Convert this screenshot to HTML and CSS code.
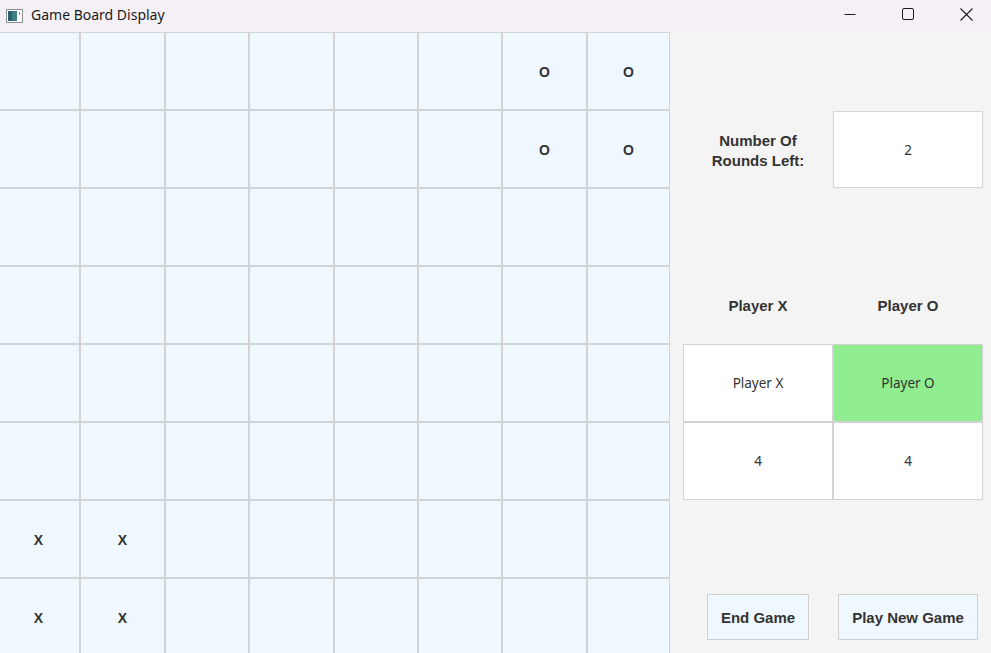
FILE: index.html
```html
<!DOCTYPE html>
<html lang="en">
<head>
<meta charset="utf-8">
<title>Game Board Display</title>
<link rel="stylesheet" href="styles.css">
</head>
<body>
<div class="window">
  <header class="titlebar">
    <div class="title">
      <svg class="app-icon" width="17" height="14" viewBox="0 0 17 14">
        <rect x="0.5" y="0.5" width="16" height="13" fill="#ffffff" stroke="#8a8f94"/>
        <rect x="2" y="2" width="9" height="10" fill="#3f7f80"/>
        <rect x="2" y="2" width="4" height="10" fill="#2e5f6b"/>
        <rect x="13" y="3" width="1" height="3" fill="#7f8a90"/>
      </svg>
      <span class="title-text">Game Board Display</span>
    </div>
    <div class="controls">
      <span class="ctl"><svg width="12" height="12" viewBox="0 0 12 12"><path d="M0.5 6.5h11" stroke="#1a1a1a" stroke-width="1"/></svg></span>
      <span class="ctl"><svg width="12" height="12" viewBox="0 0 12 12"><rect x="0.5" y="0.5" width="11" height="11" rx="1.5" fill="none" stroke="#1a1a1a" stroke-width="1"/></svg></span>
      <span class="ctl"><svg width="13" height="13" viewBox="0 0 13 13"><path d="M0.5 0.5l12 12M12.5 0.5l-12 12" stroke="#1a1a1a" stroke-width="1.1"/></svg></span>
    </div>
  </header>
  <main class="main">
    <section class="board">
      <div class="cell"></div><div class="cell"></div><div class="cell"></div><div class="cell"></div><div class="cell"></div><div class="cell"></div><div class="cell">O</div><div class="cell">O</div>
      <div class="cell"></div><div class="cell"></div><div class="cell"></div><div class="cell"></div><div class="cell"></div><div class="cell"></div><div class="cell">O</div><div class="cell">O</div>
      <div class="cell"></div><div class="cell"></div><div class="cell"></div><div class="cell"></div><div class="cell"></div><div class="cell"></div><div class="cell"></div><div class="cell"></div>
      <div class="cell"></div><div class="cell"></div><div class="cell"></div><div class="cell"></div><div class="cell"></div><div class="cell"></div><div class="cell"></div><div class="cell"></div>
      <div class="cell"></div><div class="cell"></div><div class="cell"></div><div class="cell"></div><div class="cell"></div><div class="cell"></div><div class="cell"></div><div class="cell"></div>
      <div class="cell"></div><div class="cell"></div><div class="cell"></div><div class="cell"></div><div class="cell"></div><div class="cell"></div><div class="cell"></div><div class="cell"></div>
      <div class="cell">X</div><div class="cell">X</div><div class="cell"></div><div class="cell"></div><div class="cell"></div><div class="cell"></div><div class="cell"></div><div class="cell"></div>
      <div class="cell">X</div><div class="cell">X</div><div class="cell"></div><div class="cell"></div><div class="cell"></div><div class="cell"></div><div class="cell"></div><div class="cell"></div>
    </section>
    <aside class="panel">
      <div class="slot"></div><div class="slot"></div>
      <div class="slot label rounds-label">Number Of<br>Rounds Left:</div>
      <div class="slot"><div class="box rounds">2</div></div>
      <div class="slot"></div><div class="slot"></div>
      <div class="slot label head">Player X</div>
      <div class="slot label head">Player O</div>
      <div class="box">Player X</div>
      <div class="box active">Player O</div>
      <div class="box">4</div>
      <div class="box">4</div>
      <div class="slot"></div><div class="slot"></div>
      <div class="slot"><button class="btn">End Game</button></div>
      <div class="slot"><button class="btn">Play New Game</button></div>
    </aside>
  </main>
</div>
</body>
</html>
```
FILE: styles.css
```css
* { box-sizing: border-box; }
html, body { margin: 0; padding: 0; }
body {
  width: 991px;
  height: 653px;
  overflow: hidden;
  background: #f4f4f4;
  font-family: "Liberation Sans", Arial, sans-serif;
  color: #333;
}
.window { display: flex; flex-direction: column; height: 653px; }
.titlebar {
  height: 32px;
  flex: 0 0 32px;
  background: #f5f0f5;
  display: flex;
  align-items: center;
  justify-content: space-between;
}
.title { display: flex; align-items: center; padding-left: 6px; }
.app-icon { display: block; margin-right: 8px; }
.title-text {
  font-family: "Noto Sans", "Open Sans", sans-serif;
  font-size: 14px;
  color: #1a1a1a;
  position: relative;
  top: -2px;
}
.controls { display: flex; height: 32px; margin-right: -4px; }
.ctl {
  width: 58px;
  height: 32px;
  display: flex;
  align-items: center;
  justify-content: center;
  padding-bottom: 4px;
}
.main { display: flex; flex: 1; overflow: hidden; }
.board {
  display: grid;
  grid-template-columns: 80px 85px 84px 85px 84px 84px 85px 83px;
  grid-template-rows: repeat(8, 78px);
  width: 670px;
  flex: 0 0 670px;
  background: #f0f8ff;
}
.cell {
  border: 1px solid #d3d3d3;
  background: #f0f8ff;
  display: flex;
  align-items: center;
  justify-content: center;
  padding-top: 2px;
  font-weight: bold;
  font-size: 14px;
  color: #333;
}
.cell:nth-child(8n+1) { border-left: 0; padding-right: 2px; }
.panel {
  flex: 1;
  display: grid;
  grid-template-columns: 150px 150px;
  grid-template-rows: repeat(8, 78px);
  padding-left: 13px;
  background: #f4f4f4;
}
.slot {
  display: flex;
  align-items: center;
  justify-content: center;
}
.label {
  font-weight: bold;
  font-size: 15px;
  line-height: 20px;
  text-align: center;
  color: #333;
}
.rounds-label { padding-top: 4px; }
.head { padding-top: 2px; }
.box {
  background: #fff;
  border: 1px solid #d3d3d3;
  display: flex;
  align-items: center;
  justify-content: center;
  font-family: "Noto Sans", "Open Sans", sans-serif;
  font-size: 13.5px;
  color: #333;
}
.box.rounds { width: 150px; height: 77px; align-self: flex-end; margin-top: 1px; }
.box.active { background: #90ee90; }
.btn {
  height: 46px;
  padding: 0 13px;
  background: #f0f8ff;
  border: 1px solid #cfcfcf;
  font-family: "Liberation Sans", Arial, sans-serif;
  font-weight: bold;
  font-size: 15px;
  color: #333;
  border-radius: 0;
}
```
